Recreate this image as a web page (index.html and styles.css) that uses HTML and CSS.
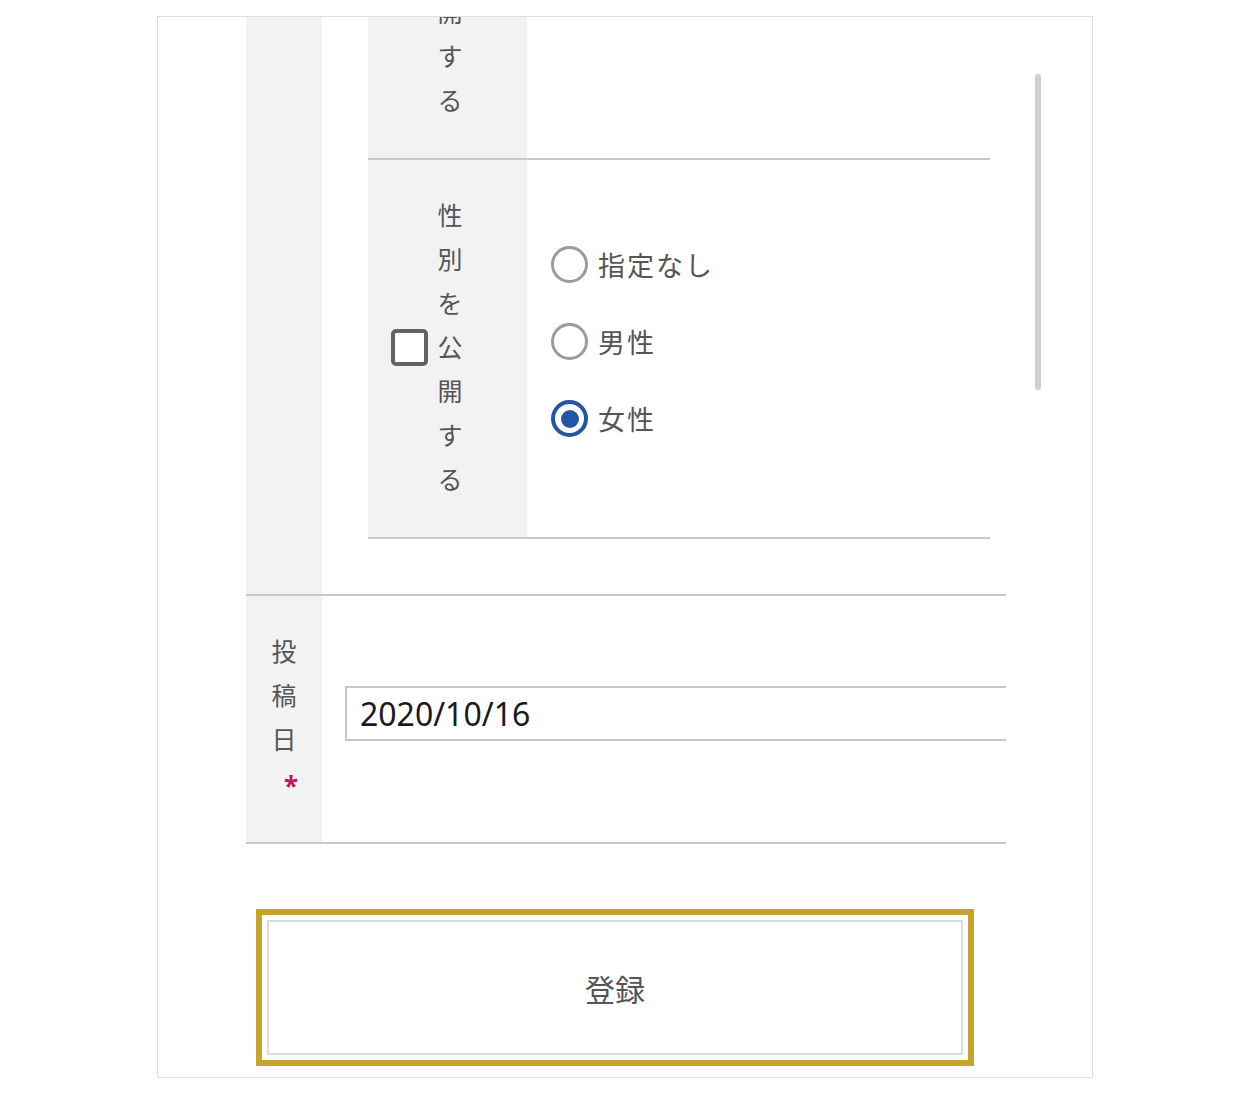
FILE: index.html
```html
<!DOCTYPE html>
<html lang="ja">
<head>
<meta charset="utf-8">
<title>フォーム</title>
<link rel="stylesheet" href="styles.css">
</head>
<body>
<div class="frame">
  <div class="form">
    <div class="orow orow-profile">
      <div class="olabel"></div>
      <div class="ocontent">
        <div class="ntable">
          <div class="nrow">
            <div class="nlabel">
              <span class="cb"></span>
              <span class="vtext">年齢を公開する</span>
            </div>
            <div class="ncontent"></div>
          </div>
          <div class="nrow">
            <div class="nlabel">
              <span class="cb"></span>
              <span class="vtext">性別を公開する</span>
            </div>
            <div class="ncontent radios">
              <div class="ritem"><span class="radio"></span><span class="rtext">指定なし</span></div>
              <div class="ritem"><span class="radio"></span><span class="rtext">男性</span></div>
              <div class="ritem"><span class="radio on"></span><span class="rtext">女性</span></div>
            </div>
          </div>
        </div>
      </div>
    </div>
    <div class="orow orow-date">
      <div class="olabel date-label">
        <span class="vtext">投稿日</span>
        <span class="req">*</span>
      </div>
      <div class="ocontent date-content">
        <div class="date-input">2020/10/16</div>
      </div>
    </div>
  </div>
  <div class="submit-wrap">
    <button class="submit" type="button">登録</button>
  </div>
  <div class="scrollbar"></div>
</div>
</body>
</html>
```

FILE: styles.css
```css
html, body {
  margin: 0;
  padding: 0;
  background: #ffffff;
}

body {
  font-family: "Noto Sans CJK JP", "Noto Sans", sans-serif;
  color: #555555;
}

.frame {
  position: relative;
  box-sizing: border-box;
  margin: 16px 0 0 157px;
  width: 936px;
  height: 1062px;
  border: 1px solid #dedede;
  overflow: hidden;
  padding: 0 86px 0 88px;
}

.form {
  margin-top: -236px;
  width: 760px;
}

.orow {
  display: flex;
  border-bottom: 2px solid #c8c8c8;
}

.olabel {
  width: 76px;
  flex: none;
  background: #f2f2f2;
}

.ocontent {
  flex: 1;
  min-width: 0;
}

.orow-profile .ocontent {
  padding: 0 16px 55px 46px;
}

.nrow {
  display: flex;
  border-bottom: 2px solid #c8c8c8;
}

.nlabel {
  width: 159px;
  flex: none;
  box-sizing: border-box;
  background: #f2f2f2;
  display: flex;
  align-items: center;
  padding: 32px 0 37px 23px;
}

.cb {
  box-sizing: border-box;
  width: 37px;
  height: 37px;
  border: 4px solid #626262;
  border-radius: 5px;
  background: #ffffff;
  flex: none;
  margin-right: 9px;
  margin-top: 2px;
}

.vtext {
  display: block;
  width: 26px;
  font-size: 25px;
  line-height: 44px;
  text-align: center;
  word-break: break-all;
  color: #555555;
}

.ncontent {
  flex: 1;
}

.radios {
  display: flex;
  flex-direction: column;
  gap: 40px;
  padding: 86px 0 0 24px;
}

.ritem {
  display: flex;
  align-items: center;
  height: 37px;
}

.radio {
  position: relative;
  box-sizing: border-box;
  width: 37px;
  height: 37px;
  border: 3px solid #9b9b9b;
  border-radius: 50%;
  background: #ffffff;
  flex: none;
}

.radio.on {
  border: 4px solid #2456a8;
}

.radio.on::after {
  content: "";
  position: absolute;
  left: 50%;
  top: 50%;
  width: 18px;
  height: 18px;
  margin: -9px 0 0 -9px;
  border-radius: 50%;
  background: #2456a8;
}

.rtext {
  margin-left: 10px;
  font-size: 27px;
  letter-spacing: 2px;
  color: #555555;
  line-height: 37px;
}

.date-label {
  display: flex;
  flex-direction: column;
  align-items: center;
  padding: 32px 0 38px;
}

.req {
  display: block;
  height: 36px;
  margin-top: 8px;
  line-height: 36px;
  font-family: "Noto Sans", sans-serif;
  font-size: 26px;
  font-weight: 700;
  color: #c2185b;
  padding-left: 14px;
}

.date-content {
  padding: 90px 0 0 23px;
}

.date-input {
  box-sizing: border-box;
  height: 55px;
  border: 2px solid #c8c8c8;
  border-right: none;
  padding-left: 13px;
  font-family: "Noto Sans", sans-serif;
  font-size: 32px;
  line-height: 51px;
  color: #1a1a1a;
  background: #ffffff;
}

.submit-wrap {
  box-sizing: border-box;
  margin: 65px 0 0 10px;
  width: 718px;
  border: 6px solid #c6a22e;
  padding: 5px;
  background: #ffffff;
}

.submit {
  display: block;
  box-sizing: border-box;
  width: 100%;
  height: 135px;
  border: 2px solid #dcdce0;
  background: #ffffff;
  font-family: "Noto Sans CJK JP", sans-serif;
  font-size: 30px;
  color: #555555;
  padding: 0;
}

.scrollbar {
  position: absolute;
  left: 877px;
  top: 57px;
  width: 6px;
  height: 316px;
  border-radius: 3px;
  background: #cfcfcf;
}
```
